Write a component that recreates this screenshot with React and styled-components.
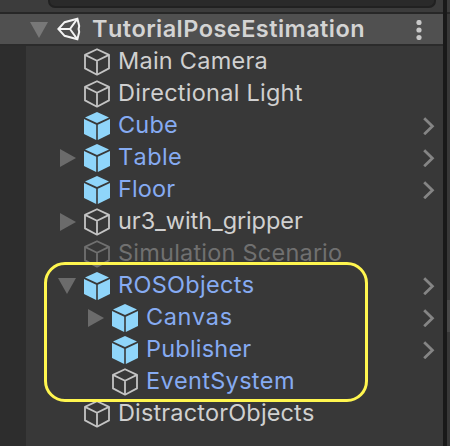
import React from "react";
import styled, { createGlobalStyle } from "styled-components";

const GlobalStyle = createGlobalStyle`
  * { box-sizing: border-box; }
  body { margin: 0; background: #383838; overflow: hidden; }
`;

const Window = styled.div`
  display: grid;
  grid-template-columns: 443px 4px 3px;
  width: 450px;
  height: 446px;
  overflow: hidden;
  background: #383838;
  font-family: Inter, sans-serif;
  font-kerning: none;
`;

const Panel = styled.section`
  position: relative;
  display: flex;
  flex-direction: column;
  min-width: 0;
`;

const Divider = styled.div`
  background: #191919;
`;

const Neighbour = styled.div`
  display: grid;
  grid-template-rows: 12px 2px 286px 32px 1fr;
  background: #383838;
`;

const Strip = styled.div`
  background: ${(p) => p.$color};
`;

const Toolbar = styled.div`
  flex: none;
  height: 12px;
  padding: 0 7px 0 48px;
  background: #3c3c3c;
`;

const SearchField = styled.div`
  height: 8px;
  background: #2a2a2a;
  border: 2px solid #212121;
  border-top: 0;
  border-radius: 0 0 7px 7px;
`;

const SceneHeader = styled.header`
  flex: none;
  display: flex;
  align-items: center;
  height: 34px;
  background: #505050;
  border-top: 2px solid #272727;
  border-bottom: 2px solid #2b2b2b;
`;

const HeaderArrow = styled.div`
  display: flex;
  width: 57px;
  padding: 2px 0 0 30px;
`;

const SceneTitle = styled.h1`
  flex: 1;
  margin: 0 0 0 11px;
  color: #d4d4d4;
  font-size: 23.5px;
  line-height: 30px;
  font-weight: 600;
  letter-spacing: 0.44px;
  white-space: nowrap;
`;

const MenuButton = styled.button`
  display: flex;
  padding: 2px 0 0;
  margin-right: 21px;
  border: 0;
  background: none;
`;

const Body = styled.div`
  flex: 1;
  display: grid;
  grid-template-columns: 26px 1fr;
`;

const Gutter = styled.div`
  background: #2d2d2d;
`;

const Tree = styled.ul`
  margin: 0;
  padding: 0;
  list-style: none;
`;

const Row = styled.li`
  display: flex;
  align-items: center;
  height: 32px;
  padding-left: ${(p) => 32 + p.$depth * 28}px;
  padding-right: 8px;
  color: ${(p) => (p.$tone === "prefab" ? "#86abf2" : p.$tone === "off" ? "#707070" : "#d0d0d0")};
`;

const Fold = styled.span`
  display: flex;
  flex: none;
  width: 26px;
`;

const Label = styled.span`
  flex: 1;
  margin-left: 8px;
  padding-bottom: 2px;
  font-size: 23.5px;
  line-height: 30px;
  letter-spacing: ${(p) => p.$spacing}px;
  white-space: nowrap;
`;

const Highlight = styled.div`
  position: absolute;
  left: 44px;
  top: 262px;
  width: 324px;
  height: 140px;
  border: 3px solid #fff64f;
  border-radius: 21px;
`;

const Icon = styled.svg`
  display: block;
  flex: none;
`;

function Arrow({ open, color = "#6b6b6b" }) {
  return (
    <Icon width="18" height="18" viewBox="0 0 18 18" fill={color}>
      <path d={open ? "M0 1H18L9 17Z" : "M2 0L18 9L2 18Z"} />
    </Icon>
  );
}

function CubeIcon({ filled, color }) {
  return (
    <Icon width="26" height="28" viewBox="0 0 26 28">
      {filled ? (
        <g fill="#8fd5fa">
          <path d="M13 0L25 5.5L13 11L1 5.5Z" />
          <path d="M0 7L12.2 12.7V28L0 22Z" />
          <path d="M26 7L13.8 12.7V28L26 22Z" />
        </g>
      ) : (
        <g fill="none" stroke={color} strokeWidth="1.8" strokeLinejoin="round">
          <path d="M13 1.2L25 6.9V20.4L13 26.7L1 20.4V6.9Z" />
          <path d="M1 6.9L13 12.7L25 6.9M13 12.7V26.7" />
        </g>
      )}
    </Icon>
  );
}

function UnityLogo() {
  return (
    <Icon width="24" height="24" viewBox="0 0 24 24" fill="none" stroke="#f4f4f4" strokeWidth="2">
      <path d="M1.4 12L7.6 5.2L20.4 1.7L22.2 9L21.6 12L22.2 15L20.4 22.3L7.6 18.8Z" />
      <path d="M1.4 12H13L20.4 1.7M13 12L20.4 22.3" />
    </Icon>
  );
}

function Chevron() {
  return (
    <Icon width="12" height="18" viewBox="0 0 12 18">
      <path d="M1.2 1.2L9.4 9.2L1.2 17.2" fill="none" stroke="#858585" strokeWidth="2.8" />
    </Icon>
  );
}

const items = [
  { name: "Main Camera", spacing: 0.25 },
  { name: "Directional Light", spacing: 0.25 },
  { name: "Cube", tone: "prefab", chevron: true, spacing: 0.2 },
  { name: "Table", tone: "prefab", chevron: true, fold: "closed", spacing: 0.4 },
  { name: "Floor", tone: "prefab", chevron: true, spacing: 0.1 },
  { name: "ur3_with_gripper", fold: "closed", spacing: -0.05 },
  { name: "Simulation Scenario", tone: "off", spacing: 0.22 },
  { name: "ROSObjects", tone: "prefab", chevron: true, fold: "open", spacing: 0.3 },
  { name: "Canvas", tone: "prefab", chevron: true, fold: "closed", depth: 1, spacing: 0.6 },
  { name: "Publisher", tone: "prefab", chevron: true, depth: 1, spacing: 0.2 },
  { name: "EventSystem", tone: "prefab", plain: true, depth: 1, spacing: 0.32 },
  { name: "DistractorObjects", spacing: 0.14 },
];

export default function App() {
  return (
    <>
      <GlobalStyle />
      <Window>
        <Panel>
          <Toolbar>
            <SearchField />
          </Toolbar>
          <SceneHeader>
            <HeaderArrow>
              <Arrow open color="#787878" />
            </HeaderArrow>
            <UnityLogo />
            <SceneTitle>TutorialPoseEstimation</SceneTitle>
            <MenuButton aria-label="Scene menu">
              <Icon width="6" height="20" viewBox="0 0 6 20" fill="#c8c8c8">
                <circle cx="3" cy="2.5" r="2.6" />
                <circle cx="3" cy="10" r="2.6" />
                <circle cx="3" cy="17.5" r="2.6" />
              </Icon>
            </MenuButton>
          </SceneHeader>
          <Body>
            <Gutter />
            <Tree>
              {items.map((item) => (
                <Row key={item.name} $tone={item.tone} $depth={item.depth || 0}>
                  <Fold>{item.fold && <Arrow open={item.fold === "open"} />}</Fold>
                  <CubeIcon
                    filled={item.tone === "prefab" && !item.plain}
                    color={item.tone === "off" ? "#707070" : "#c4c4c4"}
                  />
                  <Label $spacing={item.spacing}>{item.name}</Label>
                  {item.chevron && <Chevron />}
                </Row>
              ))}
            </Tree>
          </Body>
          <Highlight />
        </Panel>
        <Divider />
        <Neighbour>
          <Strip $color="#3c3c3c" />
          <Strip $color="#272727" />
          <Strip $color="#383838" />
          <Strip $color="#484848" />
          <Strip $color="#383838" />
        </Neighbour>
      </Window>
    </>
  );
}
